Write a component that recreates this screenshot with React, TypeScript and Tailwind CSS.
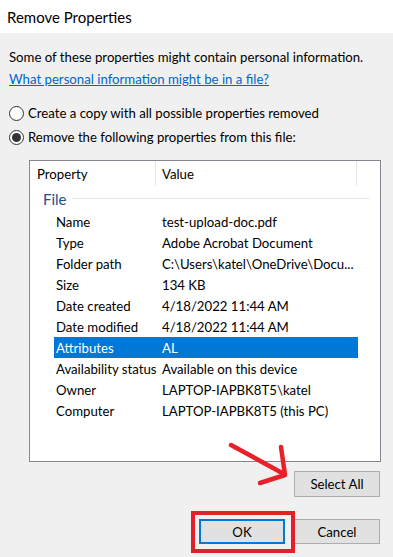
const rows: [string, string][] = [
  ['Name', 'test-upload-doc.pdf'],
  ['Type', 'Adobe Acrobat Document'],
  ['Folder path', 'C:\\Users\\katel\\OneDrive\\Docu...'],
  ['Size', '134 KB'],
  ['Date created', '4/18/2022 11:44 AM'],
  ['Date modified', '4/18/2022 11:44 AM'],
  ['Attributes', 'AL'],
  ['Availability status', 'Available on this device'],
  ['Owner', 'LAPTOP-IAPBK8T5\\katel'],
  ['Computer', 'LAPTOP-IAPBK8T5 (this PC)'],
];

function Radio({ checked, label }: { checked?: boolean; label: string }) {
  return (
    <div className="flex h-[20px] items-center">
      <span className="flex h-[15px] w-[15px] shrink-0 items-center justify-center rounded-full border border-[#333] bg-white">
        {checked && <span className="h-[9px] w-[9px] rounded-full bg-[#333]" />}
      </span>
      <span className="ml-[4px]">{label}</span>
    </div>
  );
}

export default function App() {
  return (
    <div className="relative flex h-[557px] w-[393px] flex-col overflow-hidden whitespace-nowrap font-['Lato',sans-serif] text-[13.2px] leading-[20px] text-black">
      {/* Title bar */}
      <div className="flex h-[33px] shrink-0 items-center bg-white pl-[7px] text-[15px]">Remove Properties</div>

      <div className="flex-1 bg-[#f0f0f0] pl-[9px] pt-[14px]">
        <p>Some of these properties might contain personal information.</p>
        <p className="mt-[2px]">
          <a className="text-[#0066cc] underline">What personal information might be in a file?</a>
        </p>

        <div className="mt-[14px]">
          <Radio label="Create a copy with all possible properties removed" />
        </div>
        <div className="mt-[4px]">
          <Radio checked label="Remove the following properties from this file:" />
        </div>

        {/* Property list */}
        <div className="ml-[20px] mt-[13px] h-[302px] w-[352px] border border-[#828790] bg-white">
          <div className="flex h-[25px]">
            <div className="flex w-[126px] items-center border-r border-[#e5e5e5] pl-[7px]">Property</div>
            <div className="flex w-[201px] items-center border-r border-[#e5e5e5] pl-[6px]">Value</div>
          </div>
          <div className="flex h-[25px] items-center pl-[13px] pr-[11px]">
            <span className="text-[15px] text-[#1e4e8c]">File</span>
            <span className="ml-[5px] h-px flex-1 bg-[#dde4ec]" />
          </div>
          {rows.map(([k, v]) => {
            const sel = k === 'Attributes';
            return (
              <div
                key={k}
                className={`ml-[24px] flex h-[21px] w-[304px] items-center ${sel ? 'bg-[#0078d7] text-white' : ''}`}
              >
                <span className="w-[108px] shrink-0 overflow-hidden pl-[2px]">{k}</span>
                <span>{v}</span>
              </div>
            );
          })}
        </div>

        <div className="ml-[285px] mt-[9px] flex h-[26px] w-[86px] items-center justify-center border border-[#adadad] bg-[#e1e1e1]">
          Select All
        </div>

        <div className="mt-[22px] flex h-[25px] gap-[9px] pl-[190px]">
          <div className="flex w-[86px] items-center justify-center border-2 border-[#0078d7] bg-[#e1e1e1]">OK</div>
          <div className="flex w-[86px] items-center justify-center border border-[#adadad] bg-[#e1e1e1]">Cancel</div>
        </div>
      </div>

      {/* Annotation overlays */}
      <div className="absolute left-[191px] top-[511px] h-[42px] w-[104px] border-4 border-[#e3202a]" />
      <svg className="absolute left-0 top-0" width="393" height="557" viewBox="0 0 393 557">
        <g stroke="#e8202a" strokeWidth="4.5" strokeLinecap="round" strokeLinejoin="round" fill="none">
          <path d="M231 445 L284 474" />
          <path d="M281 447 L285 475 L260 483" />
        </g>
      </svg>
    </div>
  );
}
